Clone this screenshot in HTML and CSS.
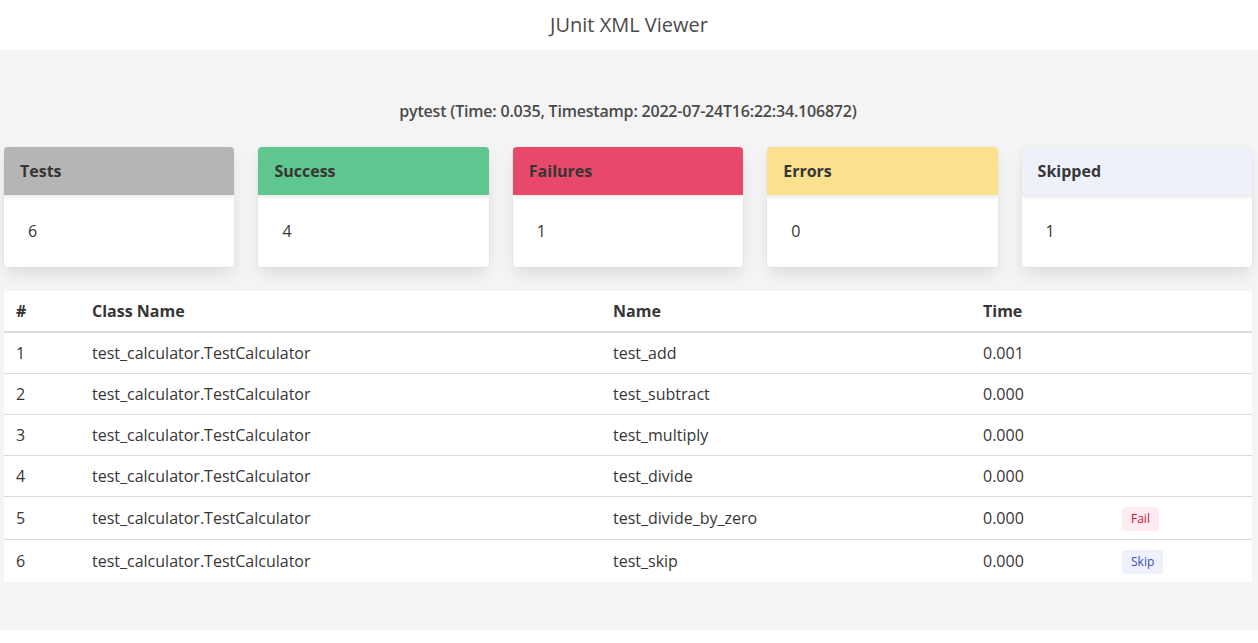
FILE: index.html
```html
<!DOCTYPE html>
<html lang="en">
<head>
<meta charset="utf-8">
<title>JUnit XML Viewer</title>
<link rel="stylesheet" href="styles.css">
</head>
<body>
<header class="topbar">JUnit XML Viewer</header>
<main class="main">
  <h2 class="suite-title">pytest (Time: 0.035, Timestamp: 2022-07-24T16:22:34.106872)</h2>
  <div class="cards">
    <div class="card">
      <div class="card-header hd-tests">Tests</div>
      <div class="card-content">6</div>
    </div>
    <div class="card">
      <div class="card-header hd-success">Success</div>
      <div class="card-content">4</div>
    </div>
    <div class="card">
      <div class="card-header hd-failures">Failures</div>
      <div class="card-content">1</div>
    </div>
    <div class="card">
      <div class="card-header hd-errors">Errors</div>
      <div class="card-content">0</div>
    </div>
    <div class="card">
      <div class="card-header hd-skipped">Skipped</div>
      <div class="card-content">1</div>
    </div>
  </div>
  <table class="results">
    <colgroup>
      <col class="c-num"><col class="c-class"><col class="c-name"><col class="c-time"><col class="c-tag">
    </colgroup>
    <thead>
      <tr><th>#</th><th>Class Name</th><th>Name</th><th>Time</th><th></th></tr>
    </thead>
    <tbody>
      <tr><td>1</td><td>test_calculator.TestCalculator</td><td>test_add</td><td>0.001</td><td></td></tr>
      <tr><td>2</td><td>test_calculator.TestCalculator</td><td>test_subtract</td><td>0.000</td><td></td></tr>
      <tr><td>3</td><td>test_calculator.TestCalculator</td><td>test_multiply</td><td>0.000</td><td></td></tr>
      <tr><td>4</td><td>test_calculator.TestCalculator</td><td>test_divide</td><td>0.000</td><td></td></tr>
      <tr><td>5</td><td>test_calculator.TestCalculator</td><td>test_divide_by_zero</td><td>0.000</td><td><span class="tag tag-fail">Fail</span></td></tr>
      <tr><td>6</td><td>test_calculator.TestCalculator</td><td>test_skip</td><td>0.000</td><td><span class="tag tag-skip">Skip</span></td></tr>
    </tbody>
  </table>
</main>
</body>
</html>
```
FILE: styles.css
```css
* { box-sizing: border-box; }
html, body { margin: 0; padding: 0; background: #fff; }
body {
  font-family: "Open Sans", "DejaVu Sans", sans-serif;
  color: #363636;
  font-size: 16px;
  line-height: 1.5;
}
.topbar {
  height: 50px;
  display: flex;
  align-items: center;
  justify-content: center;
  font-size: 20px;
  color: #4a4a4a;
  background: #fff;
}
.main {
  background: #f4f4f4;
  padding: 48px 6px 48px 4px;
}
.suite-title {
  margin: 0 0 24px 0;
  text-align: center;
  font-size: 16px;
  font-weight: 600;
  color: #4a4a4a;
  line-height: 24px;
  padding: 1px 0 0;
  letter-spacing: -0.2px;
}
.cards {
  display: grid;
  grid-template-columns: repeat(5, 1fr);
  gap: 24px;
  margin-bottom: 24px;
}
.card {
  background: #fff;
  border-radius: 4px;
  box-shadow: 0 0.5em 1em -0.125em rgba(10,10,10,0.1), 0 0 0 1px rgba(10,10,10,0.02);
  overflow: hidden;
}
.card-header {
  height: 48px;
  padding: 12px 16px;
  font-weight: 700;
  color: #363636;
  box-shadow: 0 0.125em 0.25em rgba(10,10,10,0.1);
  position: relative;
}
.hd-tests { background: #b5b5b5; }
.hd-success { background: #5fc68f; }
.hd-failures { background: #e8496a; }
.hd-errors { background: #fbe08f; }
.hd-skipped { background: #eef1fa; }
.card-content {
  height: 72px;
  padding: 24px;
}
.results {
  width: 100%;
  border-collapse: collapse;
  background: #fff;
  table-layout: fixed;
}
.c-num { width: 76px; }
.c-class { width: 521px; }
.c-name { width: 370px; }
.c-time { width: 139px; }
.results th, .results td {
  text-align: left;
  padding: 8px 12px;
  vertical-align: middle;
  border-bottom: 1px solid #dbdbdb;
  line-height: 24px;
}
.results th {
  font-weight: 700;
  border-bottom-width: 2px;
  color: #363636;
}
.results tbody tr:last-child td { border-bottom: 0; }
.tag {
  display: inline-flex;
  align-items: center;
  height: 24px;
  padding: 0 9px;
  border-radius: 4px;
  font-size: 12px;
  line-height: 1.5;
}
.tag-fail { background: #feecf0; color: #cc0f35; }
.tag-skip { background: #eef0fb; color: #3850b7; }
```
